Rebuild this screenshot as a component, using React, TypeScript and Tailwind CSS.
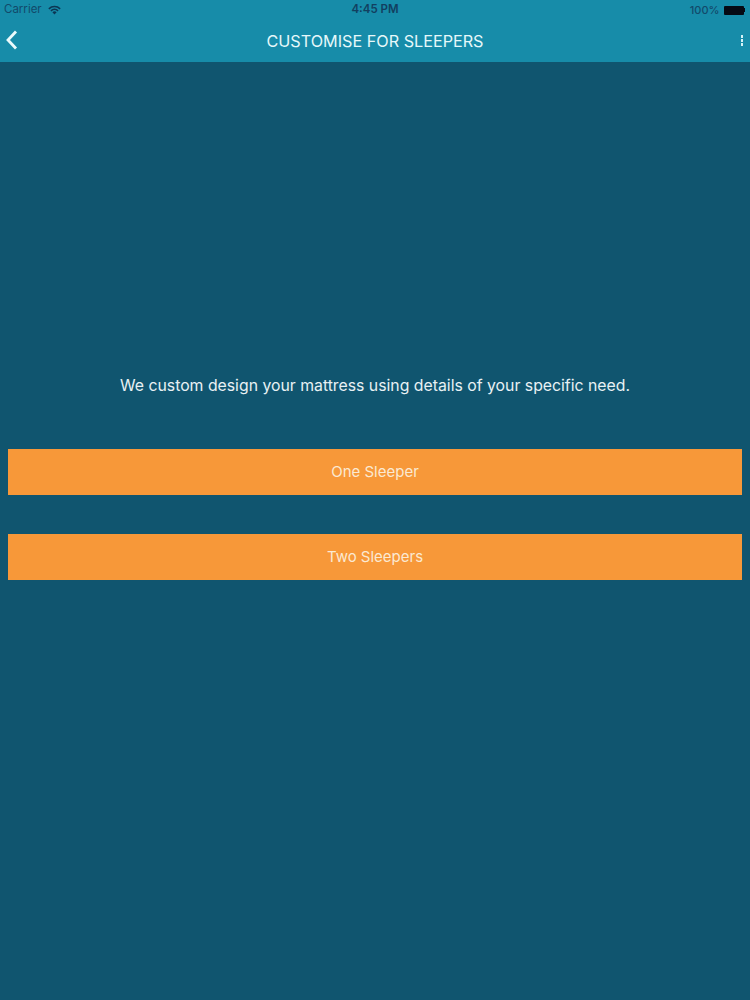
const font = { fontFamily: 'Inter, "Liberation Sans", sans-serif' }

function Wifi() {
  return (
    <svg width="13" height="10" viewBox="0 0 13 10" className="ml-[6px]">
      <path d="M0.3 3.2A9 9 0 0 1 12.7 3.2L11.6 4.4A7.4 7.4 0 0 0 1.4 4.4Z" fill="#0c3553" />
      <path d="M2.4 5.2A6 6 0 0 1 10.6 5.2L9.5 6.4A4.4 4.4 0 0 0 3.5 6.4Z" fill="#0c3553" />
      <path d="M4.4 7.2A3 3 0 0 1 8.6 7.2L6.5 9.6Z" fill="#0c3553" />
    </svg>
  )
}

function Battery() {
  return (
    <div className="flex items-center ml-[4px]">
      <div className="w-[20px] h-[9px] bg-[#050a14] rounded-[1px]" />
      <div className="w-[1.5px] h-[4px] bg-[#050a14]" />
    </div>
  )
}

export default function App() {
  return (
    <div className="w-[750px] h-[1000px] bg-[#10556f] flex flex-col" style={font}>
      <header className="h-[62px] bg-[#178ca9] flex flex-col shrink-0">
        {/* status bar */}
        <div className="relative h-[20px] flex items-center justify-between pl-[4px] pr-[5px] text-[11.5px] text-[#124a6b]">
          <div className="flex items-center">
            <span>Carrier</span>
            <Wifi />
          </div>
          <span className="absolute left-0 right-0 text-center font-semibold text-[#123f60]">4:45 PM</span>
          <div className="flex items-center font-medium">
            <span className="text-[11px]">100%</span>
            <Battery />
          </div>
        </div>
        {/* nav bar */}
        <div className="relative flex-1 flex items-center justify-center">
          <svg width="14" height="22" viewBox="0 0 14 22" className="absolute left-[5px] top-[9px]">
            <path d="M11 2.5L3 11L11 19.5" fill="none" stroke="#eafafc" strokeWidth="2.8" />
          </svg>
          <h1 className="text-[16.2px] text-[#e6f8fa]">CUSTOMISE FOR SLEEPERS</h1>
          <div className="absolute right-[7px] top-[15px] flex flex-col gap-[1.5px]">
            <div className="w-[2.5px] h-[2.5px] bg-[#d5f3f7]" />
            <div className="w-[2.5px] h-[2.5px] bg-[#d5f3f7]" />
            <div className="w-[2.5px] h-[2.5px] bg-[#d5f3f7]" />
          </div>
        </div>
      </header>
      <main className="flex flex-col px-[8px] pt-[314px]">
        <p className="text-center text-[15.8px] leading-[20px] text-[#e8f1f4]">
          We custom design your mattress using details of your specific need.
        </p>
        <button className="mt-[53px] h-[46px] bg-[#f79839] text-[#fbe9d2] text-[15px]">One Sleeper</button>
        <button className="mt-[39px] h-[46px] bg-[#f79839] text-[#fbe9d2] text-[15px]">Two Sleepers</button>
      </main>
    </div>
  )
}
